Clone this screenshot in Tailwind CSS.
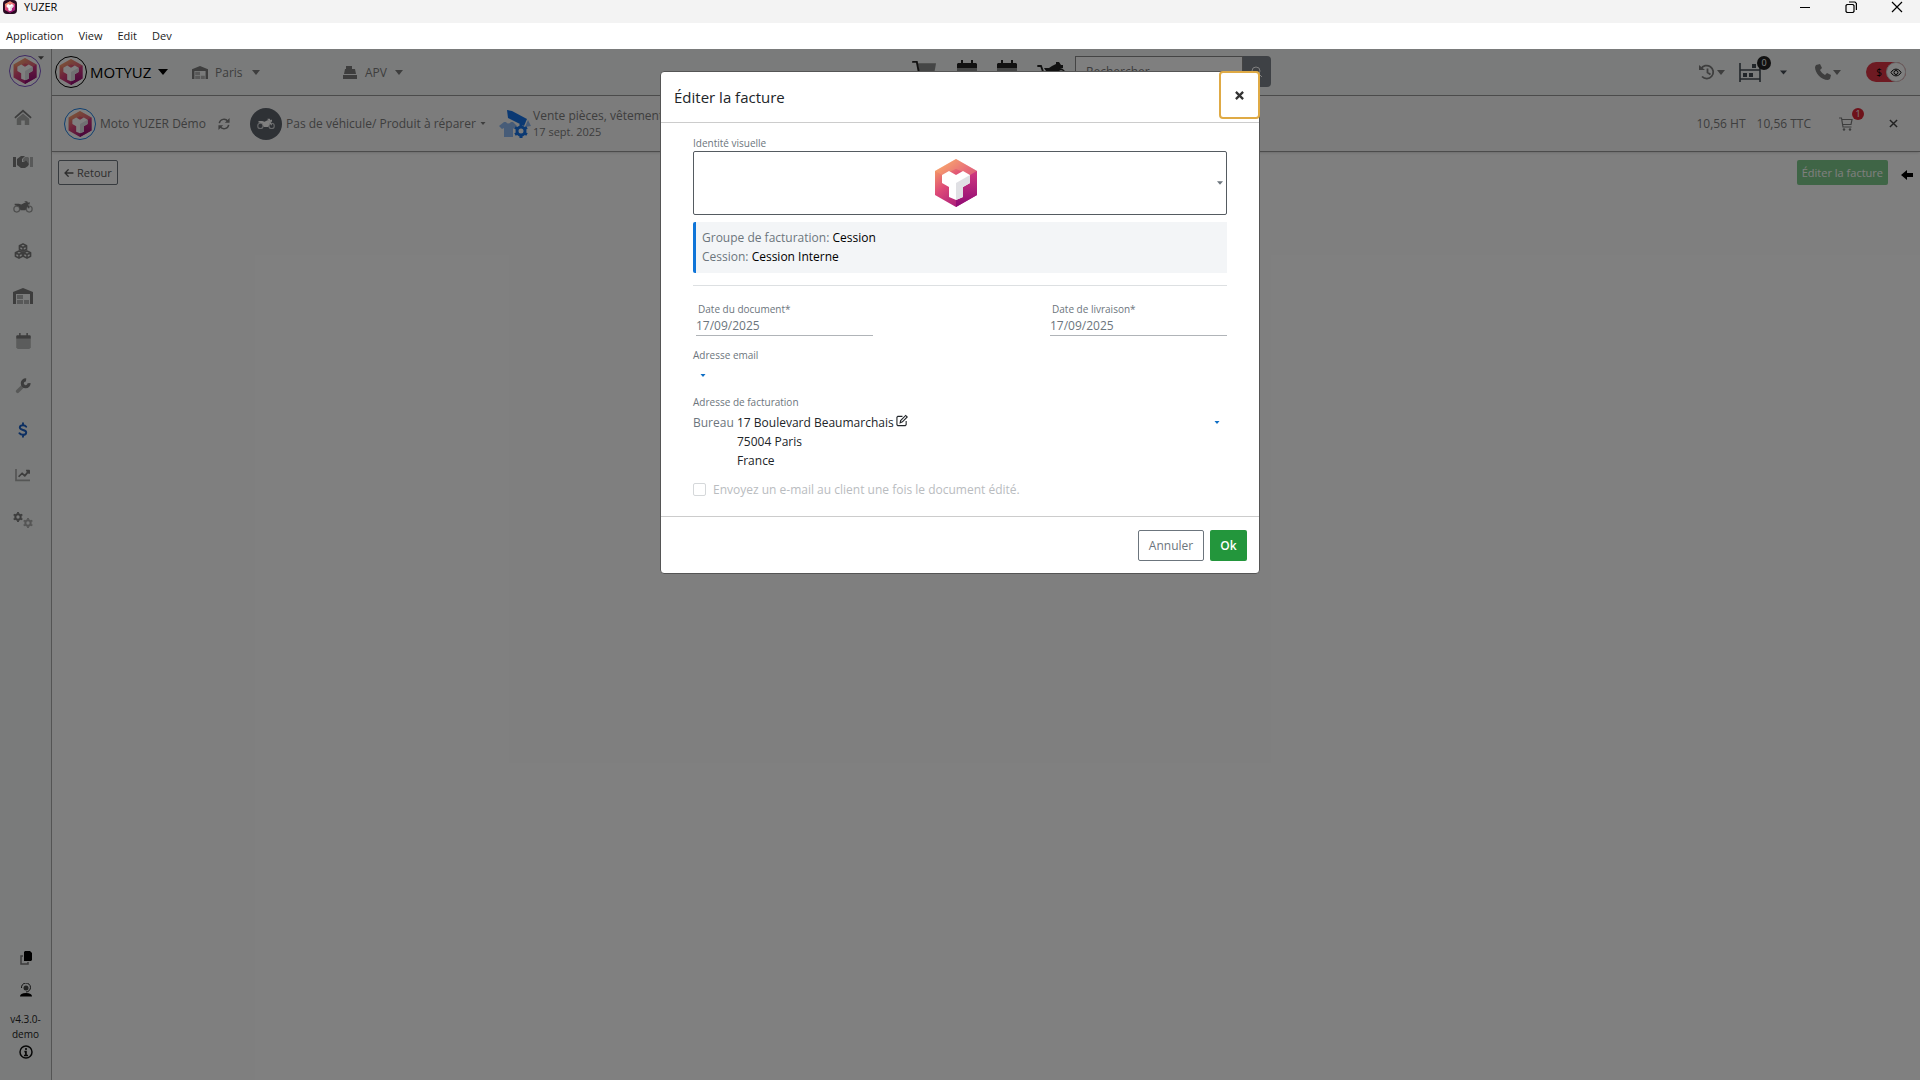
<!DOCTYPE html>
<html lang="fr">
<head>
    <meta charset="UTF-8">
    <meta name="viewport" content="width=device-width, initial-scale=1.0">
    <title>YUZER</title>
    <script src="https://cdn.jsdelivr.net/npm/@tailwindcss/browser@4"></script>
</head>
<body class="h-screen flex flex-col overflow-hidden bg-white text-[12px] leading-[19px] font-['Open_Sans','Noto_Sans',sans-serif]">

    <!-- Icon sprite -->
    <svg class="absolute size-0" aria-hidden="true">
        <defs>
            <linearGradient id="brand" x1="0.1" y1="0" x2="0.8" y2="1">
                <stop offset="0" stop-color="#fbb061" />
                <stop offset="0.45" stop-color="#dd4a78" />
                <stop offset="1" stop-color="#9c0f7c" />
            </linearGradient>
            <linearGradient id="brand-side" x1="0" y1="0" x2="0" y2="1">
                <stop offset="0" stop-color="#d23a80" />
                <stop offset="1" stop-color="#8e0a74" />
            </linearGradient>
        </defs>
        <symbol id="logo" viewBox="0 0 44 50">
            <path fill="url(#brand)" d="M22 1 43 13v24L22 49 1 37V13z" />
            <path fill="url(#brand-side)" d="M22 49V25l21-12v24z" />
            <path fill="#fbb27c" d="M1 13 22 1l21 12-7 4-14-6-14 6z" opacity=".35" />
            <path fill="#fff" d="M8 17l7-4 7 4 7-4 7 4v8l-7 4v10l-7 3-7-3V29l-7-4z" />
            <path fill="#e0e0e4" d="M22 25l14-8v8l-7 4v10l-7 3z" />
        </symbol>
        <symbol id="caret" viewBox="0 0 10 6"><path fill="currentColor" d="M0 0h10L5 6z" /></symbol>
        <symbol id="home" viewBox="0 0 20 18">
            <path fill="currentColor" opacity=".6" d="M10 5l7 6v7h-5v-5H8v5H3v-7z" />
            <path fill="none" stroke="currentColor" stroke-width="2" stroke-linecap="round" d="M1.500 9.500 10 2l8.500 7.500" />
        </symbol>
        <symbol id="handshake" viewBox="0 0 20 12">
            <path fill="currentColor" d="M0 1h3v10H0zM4 3l4-3h4L9 3v3h2l2-2 3 4-1 2-3 2H8L4 9z" />
            <path fill="currentColor" opacity=".55" d="M12 1h3l1 1v6l-3-4-2 2-1-1V3zM17 1h3v10h-3z" />
        </symbol>
        <symbol id="moto" viewBox="0 0 24 14">
            <g fill="none" stroke="currentColor" stroke-width="1.500" opacity=".7"><circle cx="4.500" cy="9.500" r="3.500" /><circle cx="19.500" cy="9.500" r="3.500" /></g>
            <path fill="currentColor" d="M2 3h5l3 1 4-2h2l-2-1V0h3l1 2 2-1v3h-2l2 4-1 1-2-3-2 5H9L7 6 2 5z" />
        </symbol>
        <symbol id="boxes" viewBox="0 0 20 18">
            <g fill="none" stroke="currentColor" stroke-width="1.800" stroke-linejoin="round">
                <path d="M10 1l4 2v4l-4 2-4-2V3zM6 3l4 2 4-2M10 5v4M5.500 9l4 2v4l-4 2-4-2v-4zM1.500 11l4 2 4-2M5.500 13v4M14.500 9l4 2v4l-4 2-4-2v-4zM10.500 11l4 2 4-2M14.500 13v4" />
            </g>
        </symbol>
        <symbol id="warehouse" viewBox="0 0 20 16">
            <path fill="currentColor" d="M0 16V4l10-4 10 4v12h-3V6H3v10z" />
            <path fill="currentColor" opacity=".55" d="M4 7h6v4H4zM4 12h6v4H4zM11 12h5v4h-5z" />
        </symbol>
        <symbol id="calendar" viewBox="0 0 20 22">
            <path fill="currentColor" opacity=".5" d="M0 8h20v12l-2 2H2l-2-2z" />
            <path fill="currentColor" d="M0 8V4l1-1h3V0h2v3h8V0h2v3h3l1 1v4z" />
        </symbol>
        <symbol id="wrench" viewBox="0 0 18 18">
            <path stroke="currentColor" opacity=".55" stroke-width="4" stroke-linecap="round" d="M3 15l6-6" />
            <path fill="none" stroke="currentColor" stroke-width="3.500" d="M12.500 2.200a3.800 3.800 0 1 0 3.300 3.500" />
        </symbol>
        <symbol id="dollar" viewBox="0 0 12 20">
            <path fill="none" stroke="currentColor" stroke-width="2.400" stroke-linecap="round" d="M6 1.500v2.500M6 16v2.500M10 6C9 4.500 7.500 4 6 4 3.500 4 2 5.200 2 7c0 4 8 2 8 6 0 1.800-1.500 3-4 3-2 0-3.500-.7-4.500-2" />
        </symbol>
        <symbol id="chart" viewBox="0 0 18 16">
            <path fill="none" stroke="currentColor" stroke-width="2" opacity=".6" d="M1 1v13h16" />
            <path fill="none" stroke="currentColor" stroke-width="2" stroke-linejoin="round" d="M4 10l4-4 3 3 5-6M12.500 3H16v3.500" />
        </symbol>
        <symbol id="gear" viewBox="0 0 12 12">
            <circle cx="6" cy="6" r="3.200" fill="none" stroke="currentColor" stroke-width="2.400" />
            <path stroke="currentColor" stroke-width="2.200" d="M6 0v2M6 10v2M.8 3l1.700 1M9.500 8l1.700 1M.8 9l1.700-1M9.500 4l1.700-1" />
        </symbol>
        <symbol id="cart" viewBox="0 0 26 24">
            <path fill="currentColor" opacity=".5" d="M6 3h19l-2 11H8z" />
            <path fill="none" stroke="currentColor" stroke-width="2" stroke-linecap="round" d="M1 1.500h4L8 17h14" />
            <circle cx="10" cy="21" r="2" fill="currentColor" /><circle cx="20" cy="21" r="2" fill="currentColor" />
        </symbol>
        <symbol id="cart-moto" viewBox="0 0 28 18">
            <path fill="none" stroke="currentColor" stroke-width="1.800" stroke-linecap="round" d="M1 4h3l4 11h14" />
            <path fill="currentColor" d="M7 6h5l3-2 4-2V0h3l2 3h2v3l-3 1-3 6h-9L9 9z" />
            <circle cx="24" cy="11" r="3.500" fill="none" stroke="currentColor" stroke-width="1.600" />
        </symbol>
        <symbol id="cart-line" viewBox="0 0 14 14">
            <path fill="none" stroke="currentColor" stroke-width="1.200" d="M0 1h2.500l1.500 9h8.500M3 2.500h10l-1 5H3.500" />
            <circle cx="5" cy="12.500" r="1.200" fill="currentColor" /><circle cx="11" cy="12.500" r="1.200" fill="currentColor" />
        </symbol>
        <symbol id="register" viewBox="0 0 14 13">
            <path fill="currentColor" d="M3 0h6v3h3l1 5H1l1-5h1zM0 9h14v4H0z" />
        </symbol>
        <symbol id="history" viewBox="0 0 16 16">
            <path fill="none" stroke="currentColor" stroke-width="1.800" d="M2 5a6.500 6.500 0 1 1 1 7.500M8.500 4.500v4l3 2" />
            <path fill="currentColor" d="M0 1l6 5H0z" />
        </symbol>
        <symbol id="rack" viewBox="0 0 22 20">
            <path fill="none" stroke="currentColor" stroke-width="1.600" d="M1 1v19M21 6v14M1 8h20M1 17h20" />
            <path fill="currentColor" d="M4 11h4v4H4zM10 11h4v4h-4zM13 2h4v4h-4z" />
        </symbol>
        <symbol id="phone" viewBox="0 0 16 16">
            <path fill="currentColor" d="M1 1l4-1 2 4-2 2c1 2 3 4 5 5l2-2 4 2-1 4-2 1C6 16 0 9 0 3z" />
        </symbol>
        <symbol id="eye" viewBox="0 0 12 9">
            <path fill="none" stroke="currentColor" d="M1 4.500C3.500 0 8.500 0 11 4.500 8.500 9 3.500 9 1 4.500z" /><circle cx="6" cy="4.500" r="2" fill="none" stroke="currentColor" />
        </symbol>
        <symbol id="refresh" viewBox="0 0 14 14">
            <path fill="none" stroke="currentColor" stroke-width="1.700" d="M1.500 6a5.500 5.500 0 0 1 10-2M12.500 8a5.500 5.500 0 0 1-10 2" />
            <path fill="currentColor" d="M13.500 0v5.500H8zM.5 14V8.500H6z" />
        </symbol>
        <symbol id="sale" viewBox="0 0 32 28">
            <path fill="#8fb8f0" d="M0 16l5-4h2q2 3 5 0h2l4 4-3 3-1-1v9H5v-9l-2 1z" />
            <path fill="#1673e6" d="M8 0l5 1 15 8-3 7-16-8z" />
            <path fill="#8fb8f0" d="M29 10l3 6-6 1z" />
            <circle cx="22" cy="21" r="4" fill="none" stroke="#1673e6" stroke-width="3" />
            <path stroke="#1673e6" stroke-width="3" d="M22 14v3M22 25v3M16 17.500l2 1M26 23.500l2 1M16 24.500l2-1M26 18.500l2-1" />
        </symbol>
        <symbol id="cross" viewBox="0 0 10 10"><path stroke="currentColor" stroke-width="1.600" d="M1 1l8 8M9 1 1 9" /></symbol>
        <symbol id="arrow" viewBox="0 0 12 10"><path fill="none" stroke="currentColor" stroke-width="1.600" stroke-linecap="round" d="M11 5H1.500M5 1 1 5l4 4" /></symbol>
        <symbol id="edit" viewBox="0 0 13 13">
            <path fill="none" stroke="currentColor" stroke-width="1.200" d="M7 2H2L1 3v8l1 1h8l1-1V7M4.500 9l.5-2.500L10.500 1l1.700 1.700L7 8z" />
        </symbol>
    </svg>

    <!-- Window title bar -->
    <header class="h-[23px] shrink-0 bg-[#f3f3f3] flex items-start justify-between text-black">
        <div class="flex items-center gap-[7px] pl-[3px]">
            <span class="size-[14px] rounded-sm bg-[#2a0b22] flex items-center justify-center">
                <svg class="w-3 h-3"><use href="#logo" /></svg>
            </span>
            <span class="text-[11px] leading-[14px]">YUZER</span>
        </div>
        <div class="flex items-center h-[14px] gap-[34px] pr-[17px]">
            <button type="button" aria-label="Réduire"><svg class="w-3 h-3" viewBox="0 0 12 12"><path stroke="#000" d="M1 6.500h10" /></svg></button>
            <button type="button" aria-label="Restaurer"><svg class="w-3 h-3" viewBox="0 0 12 12"><path fill="none" stroke="#000" stroke-width="1.200" d="M1 4.500l1-1h6l1 1v6l-1 1H2l-1-1zM4 1h6l1.400 1.400V9" /></svg></button>
            <button type="button" aria-label="Fermer"><svg class="w-3 h-3" viewBox="0 0 12 12"><path stroke="#000" stroke-width="1.200" d="M1 1l10 10M11 1 1 11" /></svg></button>
        </div>
    </header>

    <!-- Menu -->
    <nav class="h-[26px] shrink-0 flex items-center gap-[15px] pl-[6px] pb-[2px] text-[11px] text-[#222]">
        <a href="#">Application</a>
        <a href="#">View</a>
        <a href="#">Edit</a>
        <a href="#">Dev</a>
    </nav>

    <div class="relative flex-1 min-h-0 flex bg-white text-[#7c7c7c]">

        <!-- Sidebar -->
        <aside class="w-[52px] shrink-0 flex flex-col items-center bg-[#f4f7f6] border-r border-[#a8a8a8] text-[#7a7a7a]">
            <button type="button" aria-label="Profil" class="relative mt-[6px] mr-[2px] size-8 rounded-full border border-[#7b52c8] bg-white flex items-center justify-center">
                <svg class="w-6 h-7"><use href="#logo" /></svg>
                <svg class="absolute -right-1 top-0 w-[6px] h-1 text-[#555]"><use href="#caret" /></svg>
            </button>
            <nav class="mt-[19px] h-[425px] pr-[5px] flex flex-col items-center justify-between">
                <a href="#" aria-label="Accueil" class="h-[22px] flex items-center"><svg class="w-[18px] h-4"><use href="#home" /></svg></a>
                <a href="#" aria-label="Clients" class="h-[22px] flex items-center"><svg class="w-5 h-3"><use href="#handshake" /></svg></a>
                <a href="#" aria-label="Véhicules" class="h-[22px] flex items-center"><svg class="w-5 h-3"><use href="#moto" /></svg></a>
                <a href="#" aria-label="Produits" class="h-[22px] flex items-center"><svg class="w-[18px] h-4"><use href="#boxes" /></svg></a>
                <a href="#" aria-label="Stock" class="h-[22px] flex items-center"><svg class="w-5 h-4"><use href="#warehouse" /></svg></a>
                <a href="#" aria-label="Agenda" class="h-[22px] flex items-center"><svg class="w-[15px] h-4"><use href="#calendar" /></svg></a>
                <a href="#" aria-label="Atelier" class="h-[22px] flex items-center"><svg class="w-4 h-4"><use href="#wrench" /></svg></a>
                <a href="#" aria-label="Ventes" class="h-[22px] flex items-center text-[#1a5fc4]"><svg class="w-[10px] h-4"><use href="#dollar" /></svg></a>
                <a href="#" aria-label="Statistiques" class="h-[22px] flex items-center"><svg class="w-4 h-[14px]"><use href="#chart" /></svg></a>
                <a href="#" aria-label="Paramètres" class="h-[22px] flex items-center">
                    <svg class="w-5 h-4" viewBox="0 0 20 16"><use href="#gear" width="10" height="10" /><use href="#gear" x="10" y="6" width="10" height="10" opacity=".6" /></svg>
                </a>
            </nav>
            <div class="mt-auto pb-[21px] flex flex-col items-center text-[10px] leading-[15px] text-[#222]">
                <button type="button" aria-label="Copier" class="mb-[18px]"><svg class="w-3 h-[14px]" viewBox="0 0 12 14"><path fill="none" stroke="#777" stroke-width="1.500" d="M3 5H1v8h7v-2" /><path d="M4 1l1-1h5l2 2v7l-1 1H4z" /></svg></button>
                <button type="button" aria-label="Support" class="mb-[15px]"><svg class="w-3 h-[14px]" viewBox="0 0 12 14"><circle cx="6" cy="5" r="2.500" opacity=".7" /><path fill="none" stroke="#222" d="M1.500 5a4.500 4.500 0 1 1 4.500 4" /><path d="M0 13.500c0-2 2-3.500 6-3.500s6 1.500 6 3.500z" /></svg></button>
                <span>v4.3.0-</span>
                <span>demo</span>
                <button type="button" aria-label="Informations" class="mt-[3px]"><svg class="w-[14px] h-[14px]" viewBox="0 0 14 14"><circle cx="7" cy="7" r="6" fill="none" stroke="#111" stroke-width="1.500" /><path stroke="#111" stroke-width="1.600" d="M7 3v2M5.500 6.500H7v4M5 10.500h4" /></svg></button>
            </div>
        </aside>

        <div class="flex-1 min-w-0 flex flex-col">
            <!-- Top bar -->
            <div class="h-[47px] shrink-0 flex items-center bg-[#f4f7f6] border-b border-[#999] pl-[3px] pr-[14px]">
                <button type="button" class="w-[113px] mr-[24px] flex items-center text-black text-[15px]">
                    <span class="size-8 mr-[3px] rounded-full border border-black bg-white flex items-center justify-center"><svg class="w-6 h-7"><use href="#logo" /></svg></span>
                    MOTYUZ
                    <svg class="ml-auto w-[10px] h-[6px]"><use href="#caret" /></svg>
                </button>
                <button type="button" class="w-[151px] flex items-center">
                    <svg class="w-4 h-[13px] mr-[7px]"><use href="#warehouse" /></svg>
                    Paris
                    <svg class="ml-[9px] w-2 h-[5px]"><use href="#caret" /></svg>
                </button>
                <button type="button" class="flex items-center">
                    <svg class="w-[14px] h-[13px] mr-2"><use href="#register" /></svg>
                    APV
                    <svg class="ml-2 w-2 h-[5px]"><use href="#caret" /></svg>
                </button>
                <div class="absolute inset-x-0 top-[7px] flex justify-center">
                    <div class="flex pl-[263px] gap-5 text-[#222]">
                        <button type="button" aria-label="Panier" class="h-8 flex pt-1"><svg class="w-[25px] h-6"><use href="#cart" /></svg></button>
                        <button type="button" aria-label="Agenda" class="h-8 flex pt-1"><svg class="w-5 h-[22px]"><use href="#calendar" /></svg></button>
                        <button type="button" aria-label="Planning" class="h-8 flex pt-1"><svg class="w-5 h-[22px]"><use href="#calendar" /></svg></button>
                        <button type="button" aria-label="Panier moto" class="h-8 flex pt-[6px]"><svg class="w-7 h-[18px]"><use href="#cart-moto" /></svg></button>
                        <form class="-ml-[10px] flex">
                            <input type="search" aria-label="Rechercher" placeholder="Rechercher" class="w-[168px] h-[31px] px-[10px] border border-[#888] bg-white placeholder:text-[#777]">
                            <button type="button" aria-label="Lancer la recherche" class="w-7 h-[31px] rounded-r-sm bg-[#7c838a] text-white flex items-center justify-center"><svg class="w-3 h-3" viewBox="0 0 12 12"><circle cx="5" cy="5" r="4" fill="none" stroke="currentColor" /><path stroke="currentColor" d="M8 8l3 3" /></svg></button>
                        </form>
                    </div>
                </div>
                <div class="ml-auto flex items-center">
                    <button type="button" aria-label="Historique" class="flex items-center gap-[2px] mr-[14px]"><svg class="w-4 h-4"><use href="#history" /></svg><svg class="w-2 h-[5px]"><use href="#caret" /></svg></button>
                    <button type="button" aria-label="Rayonnage" class="relative flex items-center gap-[19px] mr-7 text-[#444c55]">
                        <svg class="w-[22px] h-5"><use href="#rack" /></svg>
                        <span class="absolute left-[18px] -top-[6px] size-[14px] rounded-full bg-[#222] text-white text-[9px] leading-[14px] text-center">0</span>
                        <svg class="w-[7px] h-[5px]"><use href="#caret" /></svg>
                    </button>
                    <button type="button" aria-label="Appels" class="flex items-center gap-[2px] mr-[25px]"><svg class="w-4 h-4"><use href="#phone" /></svg><svg class="w-2 h-[5px]"><use href="#caret" /></svg></button>
                    <button type="button" aria-label="Affichage" class="w-10 h-5 rounded-full bg-[#dc3545] flex items-center justify-end text-black text-[10px]">
                        <span class="mr-1">$</span>
                        <span class="size-5 rounded-full bg-white border border-[#ccc] flex items-center justify-center"><svg class="w-3 h-[9px]"><use href="#eye" /></svg></span>
                    </button>
                </div>
            </div>

            <!-- Customer bar -->
            <div class="h-14 shrink-0 flex items-center bg-[#f8f9f9] border-b border-[#999] shadow-sm pl-3 pr-[22px]">
                <span class="size-8 mr-1 rounded-full border border-[#1f7fe0] bg-white flex items-center justify-center"><svg class="w-6 h-7"><use href="#logo" /></svg></span>
                <span class="w-[118px]">Moto YUZER Démo</span>
                <button type="button" aria-label="Actualiser" class="mr-5"><svg class="w-3 h-3"><use href="#refresh" /></svg></button>
                <span class="size-8 mr-1 rounded-full bg-[#5c626b] text-white flex items-center justify-center"><svg class="w-[18px] h-3"><use href="#moto" /></svg></span>
                <button type="button" class="w-[213px] flex items-center whitespace-nowrap">Pas de véhicule/ Produit à réparer <svg class="ml-1 w-[6px] h-[3px]"><use href="#caret" /></svg></button>
                <svg class="w-8 h-7 mr-[2px]"><use href="#sale" /></svg>
                <div class="leading-4">
                    <p>Vente pièces, vêtements</p>
                    <p class="text-[11px]">17 sept. 2025</p>
                </div>
                <div class="ml-auto flex items-center">
                    <span class="mr-[11px]">10,56 HT</span>
                    <span class="mr-7">10,56 TTC</span>
                    <button type="button" aria-label="Panier" class="relative mr-9">
                        <svg class="w-[14px] h-[14px]"><use href="#cart-line" /></svg>
                        <span class="absolute left-[13px] -top-[9px] size-3 rounded-full bg-[#dc2535] text-white text-[9px] leading-3">1</span>
                    </button>
                    <button type="button" aria-label="Fermer" class="text-[#444]"><svg class="w-[9px] h-[9px]"><use href="#cross" /></svg></button>
                </div>
            </div>

            <main class="flex-1 flex items-start justify-between pt-2 pl-[6px] pr-[7px]">
                <button type="button" class="h-[25px] px-[5px] rounded-xs border border-[#6c757d] flex items-center gap-[3px] text-[11px] text-[#5a5a5a]">
                    <svg class="w-[10px] h-2"><use href="#arrow" /></svg>Retour
                </button>
                <div class="flex items-center gap-[13px]">
                    <button type="button" class="h-[25px] px-[5px] rounded-xs bg-[#7fcb8c] text-white text-[11px]">Éditer la facture</button>
                    <svg class="w-3 h-[10px] mt-1 text-black" viewBox="0 0 12 10"><path d="M0 5l6-5v3h6v4H6v3z" /></svg>
                </div>
            </main>
        </div>

        <!-- Backdrop -->
        <div class="absolute inset-0 bg-black/50 flex items-start justify-center pt-[22px]">
            <section role="dialog" aria-labelledby="dialog-title" class="w-[600px] rounded-sm border border-[#555] bg-white text-[#6c757d]">
                <div class="h-[51px] pl-[13px] flex items-start justify-between border-b border-[#ccc]">
                    <h1 id="dialog-title" class="self-center text-[15px] font-medium text-[#212529]">Éditer la facture</h1>
                    <button type="button" aria-label="Fermer" class="-m-px w-[41px] h-12 rounded-sm border-2 border-[#dfaa45] flex items-center justify-center text-[#333]"><svg class="w-[9px] h-[9px]" viewBox="0 0 10 10"><path stroke="currentColor" stroke-width="2.500" d="M1 1l8 8M9 1 1 9" /></svg></button>
                </div>

                <form class="px-8 pt-[13px]">
                    <label for="brand-select" class="block text-[10px] leading-[15px]">Identité visuelle</label>
                    <button type="button" id="brand-select" class="relative w-full h-16 rounded-xs border border-[#555b61] flex items-center justify-center">
                        <svg class="w-11 h-[50px] mr-2"><use href="#logo" /></svg>
                        <svg class="absolute right-[3px] w-[6px] h-1"><use href="#caret" /></svg>
                    </button>
                    <div class="mt-[7px] h-[51px] pl-[6px] py-[6px] border-l-3 border-[#0f75d8] rounded-l-xs bg-[#f3f5f7]">
                        <p>Groupe de facturation: <span class="text-black">Cession</span></p>
                        <p>Cession: <span class="text-black">Cession Interne</span></p>
                    </div>
                    <hr class="mt-3 border-[#dde0e2]">
                    <div class="mt-4 pl-[3px] flex justify-between">
                        <div class="w-[177px]">
                            <label for="doc-date" class="block pl-[2px] text-[10px] leading-[15px]">Date du document*</label>
                            <input id="doc-date" type="text" value="17/09/2025" class="block w-full h-[19px] pb-[2px] border-b border-[#b0b4b8]">
                        </div>
                        <div class="w-[177px]">
                            <label for="delivery-date" class="block pl-[2px] text-[10px] leading-[15px]">Date de livraison*</label>
                            <input id="delivery-date" type="text" value="17/09/2025" class="block w-full h-[19px] pb-[2px] border-b border-[#b0b4b8]">
                        </div>
                    </div>
                    <label for="email" class="mt-3 block text-[10px] leading-[15px]">Adresse email</label>
                    <button type="button" id="email" aria-label="Adresse email" class="h-8 pb-2 px-[7px] flex items-center text-[#0f6fc5]"><svg class="w-[6px] h-[3px]"><use href="#caret" /></svg></button>
                    <label for="address" class="block text-[10px] leading-[15px]">Adresse de facturation</label>
                    <div class="mt-[3px] flex items-start">
                        <span class="w-11">Bureau</span>
                        <p class="text-[#212529]">17 Boulevard Beaumarchais
                            <a href="#" aria-label="Modifier" class="inline-block align-text-top -ml-px"><svg class="w-3 h-[13px]"><use href="#edit" /></svg></a><br>
                            75004 Paris<br>France</p>
                        <button type="button" id="address" aria-label="Adresse de facturation" class="ml-auto h-[19px] px-[7px] text-[#0f6fc5]"><svg class="w-[6px] h-[3px]"><use href="#caret" /></svg></button>
                    </div>
                    <div class="mt-[10px] pb-[17px] flex items-center gap-[7px] text-[#b9bcc0]">
                        <input type="checkbox" id="send-mail" disabled class="appearance-none size-[13px] rounded-xs border border-[#d5d8da]">
                        <label for="send-mail">Envoyez un e-mail au client une fois le document édité.</label>
                    </div>
                </form>

                <div class="h-[57px] pr-3 flex items-center justify-end gap-[6px] border-t border-[#ccc]">
                    <button type="button" class="w-[66px] h-[31px] rounded-xs border border-[#6c757d]">Annuler</button>
                    <button type="button" class="w-[37px] h-[31px] rounded-xs bg-[#23963c] text-white font-semibold">Ok</button>
                </div>
            </section>
        </div>
    </div>
</body>
</html>
